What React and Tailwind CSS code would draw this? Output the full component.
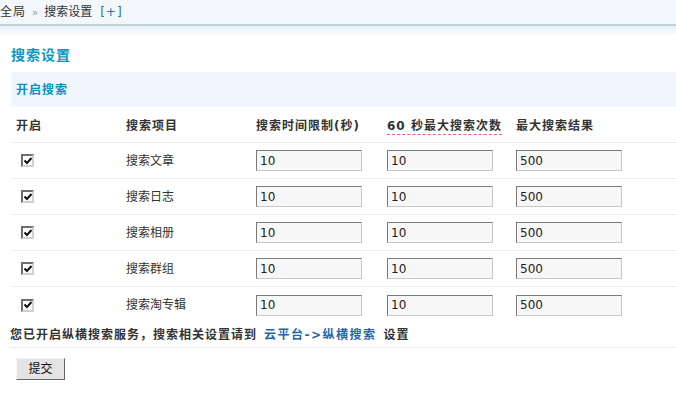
const rows = ["搜索文章", "搜索日志", "搜索相册", "搜索群组", "搜索淘专辑"];

const font = { fontFamily: '"DejaVu Sans", "Noto Sans CJK SC", sans-serif' };

function Check() {
  return (
    <span className="box-border inline-flex w-[13px] h-[13px] border-2 border-[#6e6e6e] border-r-[#d0d0d0] border-b-[#d0d0d0] bg-white items-center justify-center">
      <svg width="8" height="8" viewBox="0 0 8 8">
        <path d="M0.5 3.5 L3 6 L7.5 1" stroke="#111" strokeWidth="2" fill="none" />
      </svg>
    </span>
  );
}

function Field({ value }) {
  return (
    <input
      readOnly
      value={value}
      className="w-[106px] h-[21px] px-[3px] text-[12px] text-[#222] bg-[#f7f7f7] border border-[#c8c8c8] border-t-[#7a7a7a] border-l-[#7a7a7a] outline-none"
      style={font}
    />
  );
}

export default function App() {
  return (
    <div className="w-[676px] h-[405px] bg-white text-[12px] text-[#333] overflow-hidden" style={font}>
      <div className="h-[26px] bg-[#f2f7fc] border-b-2 border-[#c2d0d6] flex items-center text-[#333]">
        <span className="tracking-[1px]">全局</span>
        <span className="mx-[6px] text-[10px] text-[#999]">»</span>
        <span>搜索设置</span>
        <span className="ml-[8px] text-[#2a6fb0] tracking-[1px]">[+]</span>
      </div>
      <div className="h-[10px] bg-gradient-to-b from-[#e6eff9] to-white" />

      <div className="pl-[11px]">
        <div className="h-[36px] flex items-center pt-[2px] text-[14px] font-bold text-[#0d97c6] tracking-[1px]">搜索设置</div>
        <div className="h-[35px] bg-[#f0f6fd] flex items-center pl-[5px] font-bold text-[#0a8fc0] tracking-[1px]">开启搜索</div>

        <div className="grid grid-cols-[110px_130px_131px_129px_1fr] h-[36px] items-center border-b border-dotted border-[#dcdcdc] font-bold text-[#333] pt-[2px] tracking-[1px]">
          <div className="pl-[5px]">开启</div>
          <div className="pl-[5px]">搜索项目</div>
          <div className="pl-[5px]">搜索时间限制(秒)</div>
          <div className="pl-[5px]">
            <span className="border-b border-dashed border-[#ef5a86] pb-[1px]">60 秒最大搜索次数</span>
          </div>
          <div className="pl-[5px]">最大搜索结果</div>
        </div>

        {rows.map((name, i) => (
          <div
            key={name}
            className={
              "grid grid-cols-[110px_130px_131px_129px_1fr] h-[36px] items-center " +
              (i < rows.length - 1 ? "border-b border-[#eeeeee]" : "")
            }
          >
            <div className="pl-[10px] flex items-center"><Check /></div>
            <div className="pl-[5px]">{name}</div>
            <div className="pl-[5px]"><Field value="10" /></div>
            <div className="pl-[5px]"><Field value="10" /></div>
            <div className="pl-[5px]"><Field value="500" /></div>
          </div>
        ))}

        <div className="h-[25px] flex items-center border-b border-[#eeeeee] font-bold text-[#333] -ml-[1px] tracking-[1px]">
          您已开启纵横搜索服务，搜索相关设置请到
          <a className="mx-[7px] text-[#2366a8] tracking-[1.5px]">云平台-&gt;纵横搜索</a>
          设置
        </div>

        <div className="pl-[5px] pt-[10px]">
          <button
            className="w-[49px] h-[22px] bg-[#e4e4e4] border border-[#f5f5f5] border-r-[#666] border-b-[#666] text-[12px] text-[#111]"
            style={font}
          >
            提交
          </button>
        </div>
      </div>
    </div>
  );
}
